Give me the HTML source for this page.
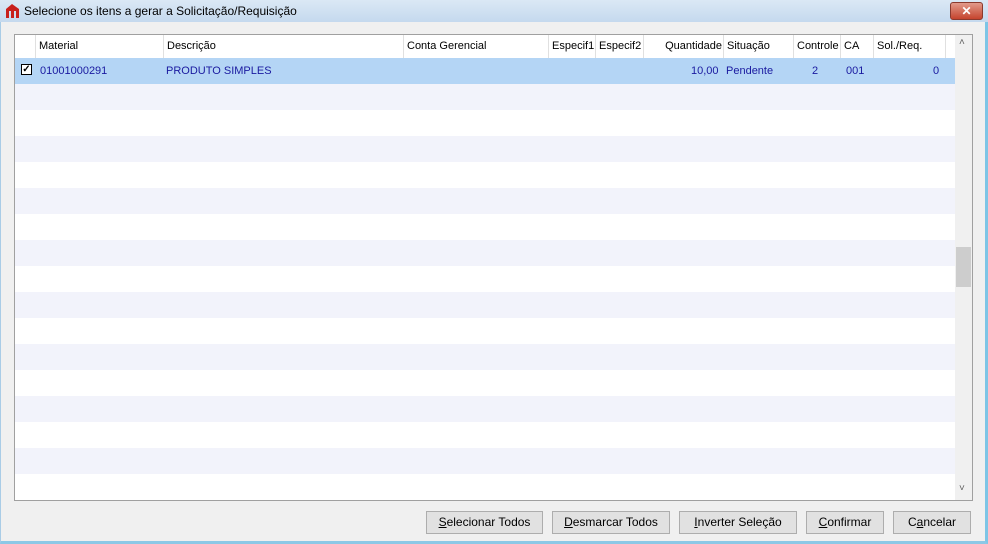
<!DOCTYPE html>
<html><head><style>
*{margin:0;padding:0;box-sizing:border-box}
body{width:988px;height:544px;overflow:hidden;background:#f0f0f0;font-family:"Liberation Sans",sans-serif;font-size:11px;position:relative}
.frame{position:absolute;left:0;top:0;width:988px;height:544px;border:1px solid #7eb4d8;border-left-color:#a9cce6;border-right:3px solid #7ec5e6;border-bottom:3px solid #8cc8e6}
.title{position:absolute;left:0;top:0;width:988px;height:22px;background:linear-gradient(#dbe8f5,#c5d9ee)}
.title span{position:absolute;left:24px;top:4px;font-size:12px;color:#000}
.close{position:absolute;left:950px;top:2px;width:33px;height:18px;background:linear-gradient(#e29a8a,#c5442e);border:1px solid #8a3a2e;border-radius:3px;color:#fff;font-weight:bold;text-align:center;line-height:16px;font-size:12px}
.grid{position:absolute;left:14px;top:34px;width:959px;height:467px;border:1px solid #a0a0a0;background:#fff;overflow:hidden}
.hdr{position:absolute;left:0;top:0;width:940px;height:23px;background:#fff}
.h{position:absolute;top:0;height:23px;border-right:1px solid #e0e0e0;padding:5px 0 0 3px;color:#000}
.row{position:absolute;left:0;width:940px;height:26px}
.c{position:absolute;top:7px;color:#1a1aa0}
.sb{position:absolute;left:940px;top:0;width:17px;height:465px;background:#f0f0f0}
.btn{position:absolute;top:511px;height:23px;border:1px solid #adadad;background:#e1e1e1;text-align:center;line-height:21px;font-size:12px}
.st{background:#f2f3fb}
</style></head><body>
<div class="frame"></div>
<div class="title"><svg style="position:absolute;left:5px;top:3px" width="15" height="16"><path d="M1 6 L7 1 L14 6 V15 H11 V8 H9 V15 H6 V8 H4 V15 H1Z" fill="#c8201c"/></svg><span>Selecione os itens a gerar a Solicitação/Requisição</span></div>
<div class="close">✕</div>
<div class="grid">
<div class="hdr">
<div class="h" style="left:0;width:21px"></div>
<div class="h" style="left:21px;width:128px">Material</div>
<div class="h" style="left:149px;width:240px">Descrição</div>
<div class="h" style="left:389px;width:145px">Conta Gerencial</div>
<div class="h" style="left:534px;width:47px">Especif1</div>
<div class="h" style="left:581px;width:48px">Especif2</div>
<div class="h" style="left:629px;width:80px;text-align:right;padding-right:1px">Quantidade</div>
<div class="h" style="left:709px;width:70px">Situação</div>
<div class="h" style="left:779px;width:47px">Controle</div>
<div class="h" style="left:826px;width:33px">CA</div>
<div class="h" style="left:859px;width:72px">Sol./Req.</div>
</div>
<div class="row" style="top:23px;background:#b4d5f5">
<div style="position:absolute;left:6px;top:6px;width:11px;height:11px;border:1px solid #000;background:#fff;font-size:10px;line-height:9px;text-align:center;font-weight:bold">✓</div>
<div class="c" style="left:25px">01001000291</div>
<div class="c" style="left:151px">PRODUTO SIMPLES</div>
<div class="c" style="left:676px">10,00</div>
<div class="c" style="left:711px">Pendente</div>
<div class="c" style="left:797px">2</div>
<div class="c" style="left:831px">001</div>
<div class="c" style="left:918px">0</div>
</div>
<div class="row st" style="top:49px"></div>
<div class="row st" style="top:101px"></div>
<div class="row st" style="top:153px"></div>
<div class="row st" style="top:205px"></div>
<div class="row st" style="top:257px"></div>
<div class="row st" style="top:309px"></div>
<div class="row st" style="top:361px"></div>
<div class="row st" style="top:413px"></div>
<div class="sb"><div style="position:absolute;left:4px;top:2px;color:#606060;font-size:10px">˄</div><div style="position:absolute;left:1px;top:212px;width:15px;height:40px;background:#cdcdcd"></div><div style="position:absolute;left:4px;top:448px;color:#606060;font-size:10px">˅</div></div>
</div>
<div class="btn" style="left:426px;width:117px"><u>S</u>elecionar Todos</div>
<div class="btn" style="left:552px;width:118px"><u>D</u>esmarcar Todos</div>
<div class="btn" style="left:679px;width:118px"><u>I</u>nverter Seleção</div>
<div class="btn" style="left:806px;width:78px"><u>C</u>onfirmar</div>
<div class="btn" style="left:893px;width:78px">C<u>a</u>ncelar</div>
</body></html>
